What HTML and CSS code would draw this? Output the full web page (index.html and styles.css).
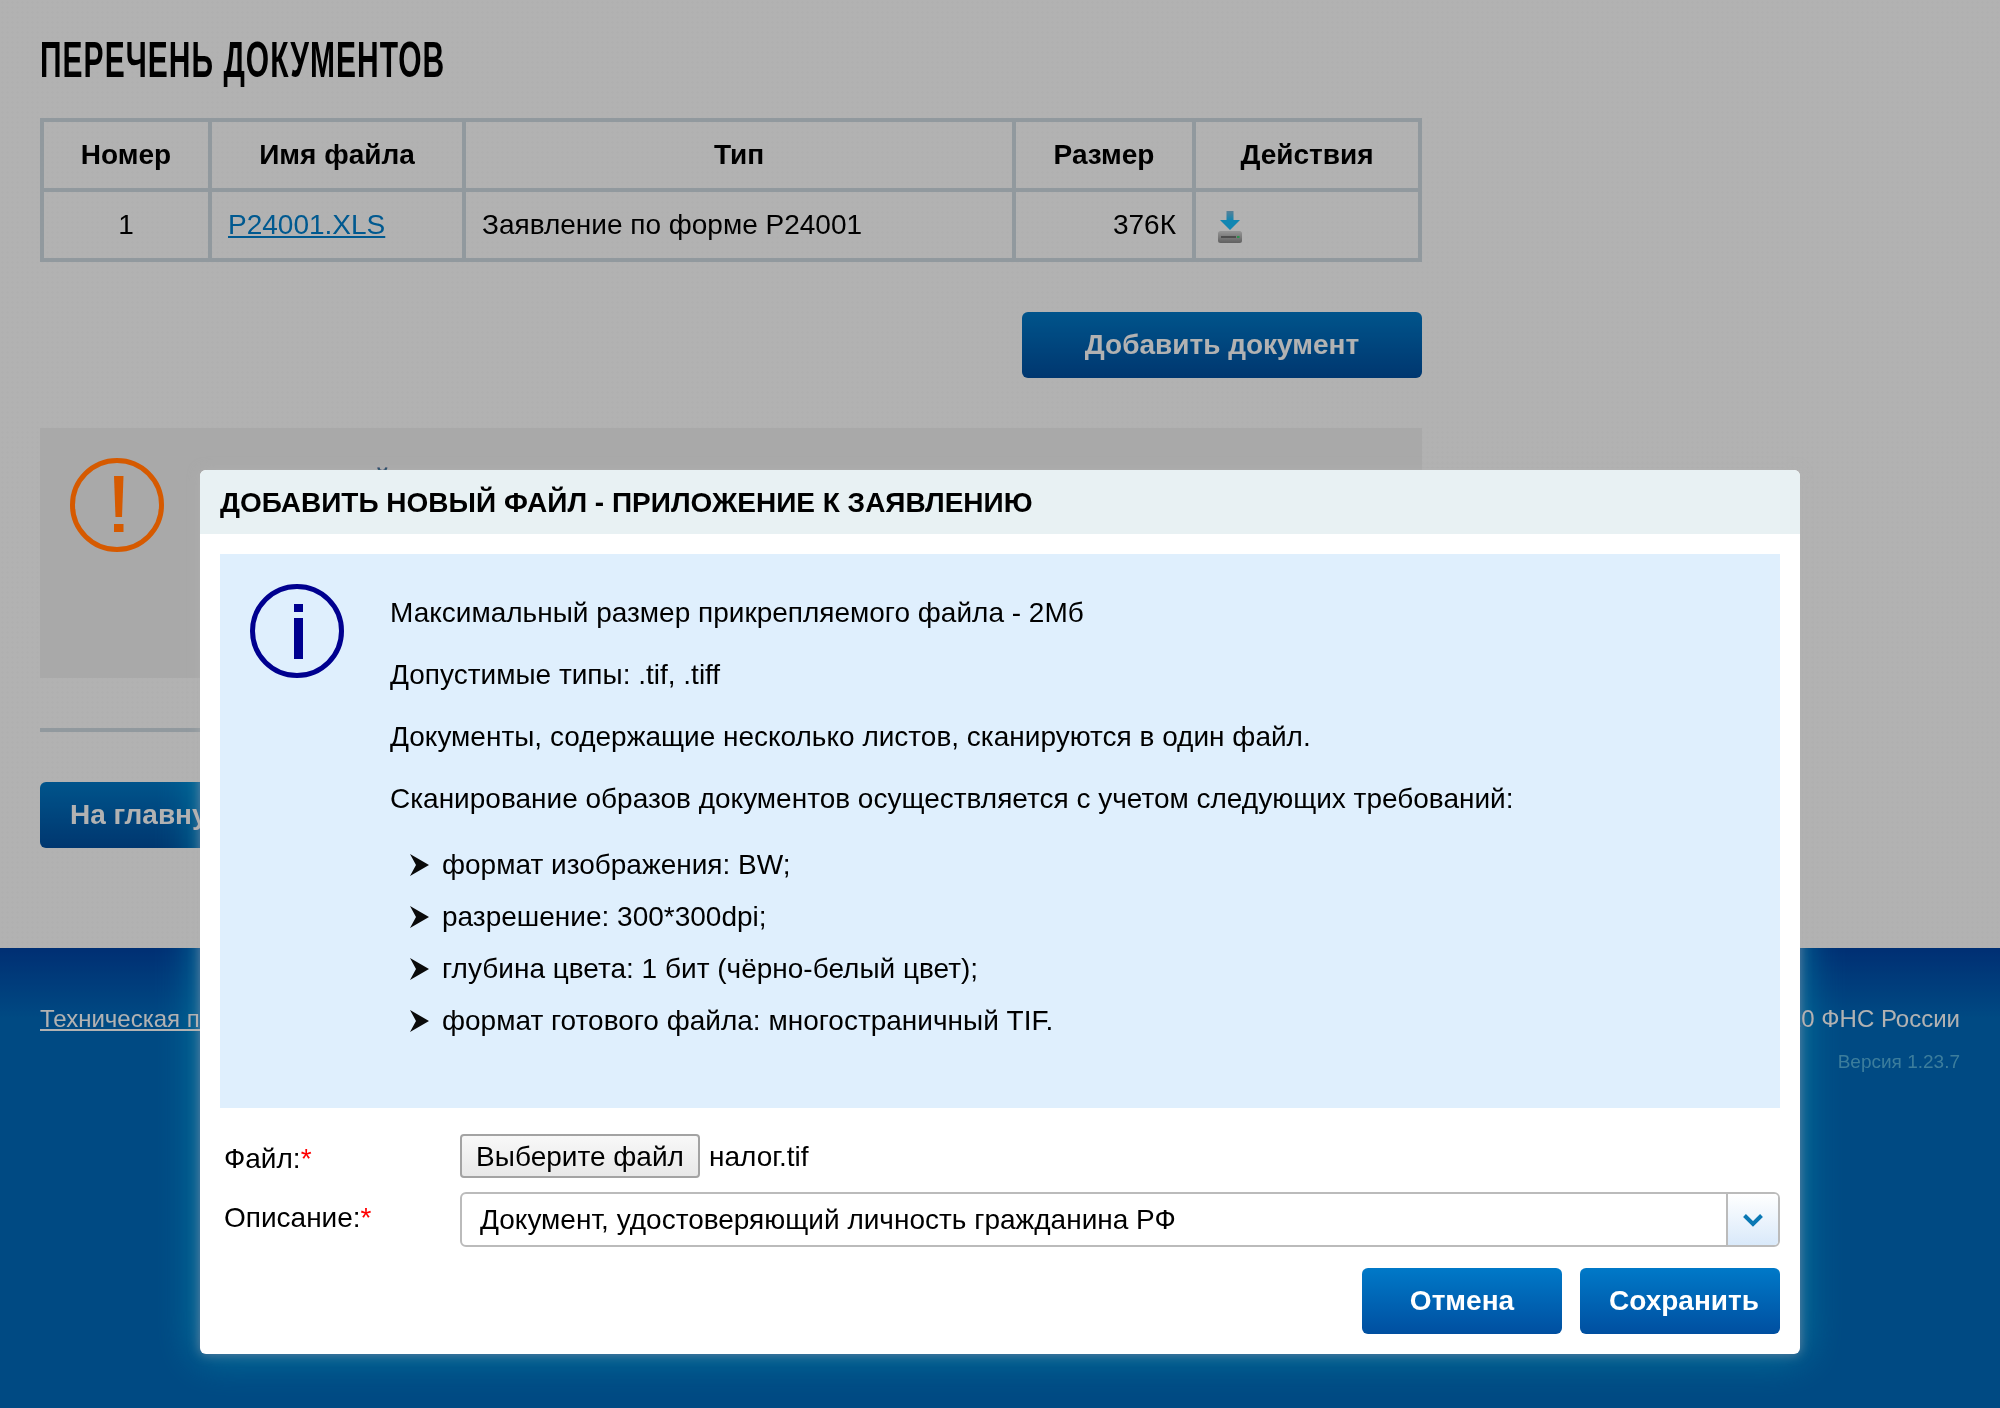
FILE: index.html
```html
<!DOCTYPE html>
<html lang="ru">
<head>
<meta charset="utf-8">
<title>Перечень документов</title>
<link rel="stylesheet" href="styles.css">
</head>
<body>
<div class="page">
  <main class="main">
    <h1 class="title"><span class="title-text">Перечень документов</span></h1>
    <table class="docs">
      <colgroup><col class="c1"><col class="c2"><col class="c3"><col class="c4"><col class="c5"></colgroup>
      <thead>
        <tr><th>Номер</th><th>Имя файла</th><th>Тип</th><th>Размер</th><th>Действия</th></tr>
      </thead>
      <tbody>
        <tr>
          <td class="center">1</td>
          <td><a class="file-link" href="#">P24001.XLS</a></td>
          <td>Заявление по форме Р24001</td>
          <td class="right">376К</td>
          <td>
            <svg class="dl-icon" viewBox="0 0 24 32" width="24" height="32">
              <defs>
                <linearGradient id="drive" x1="0" y1="0" x2="0" y2="1"><stop offset="0" stop-color="#d8d8d8"/><stop offset="1" stop-color="#8a8a8a"/></linearGradient>
                <linearGradient id="shaft" x1="0" y1="0" x2="0" y2="1"><stop offset="0" stop-color="#7fb8d8"/><stop offset=".5" stop-color="#18c0ff"/></linearGradient>
              </defs>
              <path d="M8.500 0h7v9h6.500l-10 10-10-10h6.500z" fill="url(#shaft)"/>
              <rect x="0" y="20" width="24" height="12" rx="2.500" fill="url(#drive)"/>
              <rect x="3" y="25" width="15" height="2" fill="#707070"/>
              <rect x="19" y="25" width="2.500" height="2" fill="#3fd070"/>
            </svg>
          </td>
        </tr>
      </tbody>
    </table>
    <div class="add-row"><a class="btn btn-wide" href="#">Добавить документ</a></div>
    <section class="notice">
      <svg class="warn-icon" viewBox="0 0 94 94" width="94" height="94">
        <circle cx="47" cy="47" r="44.500" fill="none" stroke="#d65a00" stroke-width="5"/>
        <path d="M44 18h9.500l-1.500 41h-6.500z" fill="#d65a00"/>
        <rect x="44" y="66" width="9.500" height="8" fill="#d65a00"/>
      </svg>
      <p class="notice-text">уважаемый</p>
    </section>
    <hr class="rule">
    <div class="home-row"><a class="btn btn-home" href="#">На главную</a></div>
  </main>
  <footer class="footer">
    <a class="footer-link" href="#">Техническая поддержка</a>
    <div class="footer-right">
      <div class="copy">© 2010 ФНС России</div>
      <div class="version">Версия 1.23.7</div>
    </div>
  </footer>
</div>

<div class="overlay"></div>

<div class="modal" role="dialog">
  <h2 class="modal-title">Добавить новый файл - приложение к заявлению</h2>
  <div class="modal-body">
    <div class="info">
      <svg class="info-icon" viewBox="0 0 94 94" width="94" height="94">
        <circle cx="47" cy="47" r="44.500" fill="none" stroke="#00008f" stroke-width="5"/>
        <rect x="44" y="20" width="9" height="8" fill="#00008f"/>
        <rect x="44" y="34" width="9" height="41" fill="#00008f"/>
      </svg>
      <div class="info-text">
        <p>Максимальный размер прикрепляемого файла - 2Мб</p>
        <p>Допустимые типы: .tif, .tiff</p>
        <p>Документы, содержащие несколько листов, сканируются в один файл.</p>
        <p>Сканирование образов документов осуществляется с учетом следующих требований:</p>
        <ul class="req">
          <li><svg class="chev" viewBox="0 0 19 22" width="19" height="22"><path d="M0 0 19 11 0 22 6 11z" fill="#0a0a0a"/></svg>формат изображения: BW;</li>
          <li><svg class="chev" viewBox="0 0 19 22" width="19" height="22"><path d="M0 0 19 11 0 22 6 11z" fill="#0a0a0a"/></svg>разрешение: 300*300dpi;</li>
          <li><svg class="chev" viewBox="0 0 19 22" width="19" height="22"><path d="M0 0 19 11 0 22 6 11z" fill="#0a0a0a"/></svg>глубина цвета: 1 бит (чёрно-белый цвет);</li>
          <li><svg class="chev" viewBox="0 0 19 22" width="19" height="22"><path d="M0 0 19 11 0 22 6 11z" fill="#0a0a0a"/></svg>формат готового файла: многостраничный TIF.</li>
        </ul>
      </div>
    </div>
    <form class="form">
      <div class="row row-file">
        <span class="label">Файл:<span class="req-star">*</span></span>
        <div class="file-field">
          <button type="button" class="file-btn">Выберите файл</button>
          <span class="file-name">налог.tif</span>
        </div>
      </div>
      <div class="row row-desc">
        <span class="label label-desc">Описание:<span class="req-star">*</span></span>
        <div class="select">
          <span class="select-value">Документ, удостоверяющий личность гражданина РФ</span>
          <span class="select-arrow">
            <svg viewBox="0 0 22 14" width="22" height="14"><path d="M2.500 2.500 11 11 19.500 2.500" fill="none" stroke="#0a78b4" stroke-width="4"/></svg>
          </span>
        </div>
      </div>
      <div class="actions">
        <button type="button" class="btn btn-modal">Отмена</button>
        <button type="button" class="btn btn-modal btn-save">Сохранить</button>
      </div>
    </form>
  </div>
</div>
</body>
</html>
```
FILE: styles.css
```css
* { box-sizing: border-box; }
html, body { margin: 0; padding: 0; }
body {
  width: 2000px;
  height: 1408px;
  overflow: hidden;
  background: #fff;
  color: #000;
  font-family: "Liberation Sans", Arial, sans-serif;
  font-size: 28px;
  position: relative;
}
.page { display: flex; flex-direction: column; height: 1408px; }
.main {
  height: 948px;
  padding: 0 578px 0 40px;
  flex: none;
  background-image: radial-gradient(circle, rgba(0, 0, 0, .012) 1px, transparent 1.2px);
  background-size: 5px 5px;
}
.title {
  margin: 0;
  height: 118px;
  padding-top: 30px;
  font-size: 50px;
  line-height: 60px;
  font-weight: 700;
  text-transform: uppercase;
}
.title-text { display: inline-block; transform: scaleX(.6); transform-origin: left center; white-space: nowrap; letter-spacing: 1.7px; }

.docs { width: 1378px; border-collapse: collapse; table-layout: fixed; }
.c1 { width: 168px; } .c2 { width: 254px; } .c3 { width: 550px; } .c4 { width: 180px; } .c5 { width: 226px; }
.docs th, .docs td { border: 4px solid #d0dbe3; height: 70px; padding: 0 16px; font-size: 28px; text-align: left; }
.docs th { text-align: center; font-weight: 700; }
.docs .center { text-align: center; }
.docs .right { text-align: right; }
.file-link { color: #0080ce; }
.dl-icon { display: block; margin: 4px 0 0 6px; filter: blur(.5px); }

.btn {
  display: flex;
  align-items: center;
  justify-content: center;
  height: 66px;
  border: 0;
  border-radius: 6px;
  background: linear-gradient(#0079c8, #004fa0);
  color: #fff;
  font: 700 28px "Liberation Sans", Arial, sans-serif;
  text-decoration: none;
}
.add-row { display: flex; justify-content: flex-end; margin-top: 50px; }
.btn-wide { width: 400px; }
.notice {
  display: flex;
  gap: 77px;
  height: 250px;
  margin-top: 50px;
  padding: 30px;
  background: #f3f3f3;
}
.warn-icon { position: relative; z-index: 1; flex: none; filter: blur(.4px); }
.notice-text { margin: 3px 0 0; line-height: 36px; }
.rule { height: 4px; margin: 50px 0 0; border: 0; background: #d0dbe3; }
.home-row { display: flex; margin-top: 50px; }
.btn-home { width: 300px; justify-content: flex-start; padding-left: 30px; }

.footer {
  flex: 1;
  display: flex;
  justify-content: space-between;
  padding: 56px 40px 0;
  background: linear-gradient(#0044a6 0, #006abc 70px, #006abc 100%);
  color: #fff;
}
.footer-link { color: #fff; font-size: 24px; line-height: 30px; }
.footer-right { text-align: right; }
.copy { font-size: 24px; line-height: 30px; }
.version { margin-top: 16px; font-size: 19px; line-height: 24px; color: #56b4e0; }

.overlay {
  position: absolute;
  inset: 0;
  background-color: rgba(0, 0, 0, .3);
}

.modal {
  position: absolute;
  left: 200px;
  top: 470px;
  width: 1600px;
  height: 884px;
  background: #fff;
  border-radius: 6px;
  box-shadow: 0 0 12px rgba(178, 178, 178, .6);
}
.modal::before {
  content: "";
  position: absolute;
  inset: 0;
  border-radius: 6px;
  box-shadow: 0 0 40px 4px rgb(0, 120, 160);
  mix-blend-mode: lighten;
  pointer-events: none;
}
.modal-title {
  margin: 0;
  height: 64px;
  padding: 1px 20px 0;
  background: #e8f1f3;
  border-radius: 6px 6px 0 0;
  font-size: 28px;
  line-height: 64px;
  font-weight: 700;
  text-transform: uppercase;
}
.modal-body { padding: 20px; }
.info {
  display: flex;
  height: 554px;
  padding: 30px 30px 0;
  gap: 46px;
  background: #dfeffd;
}
.info-icon { flex: none; filter: blur(.4px); }
.info-text { padding-top: 11px; line-height: 36px; }
.info-text p { margin: 0 0 26px; }
.req { list-style: none; margin: 30px 0 0; padding: 0 0 0 20px; }
.req li { display: flex; align-items: center; height: 36px; margin-bottom: 16px; }
.chev { flex: none; margin-right: 13px; filter: blur(.5px); }

.form { display: flex; flex-direction: column; margin-top: 26px; }
.row { display: flex; }
.row-file { height: 44px; }
.row-desc { margin-top: 14px; height: 55px; }
.label { width: 240px; padding: 1px 0 0 4px; line-height: 48px; flex: none; }
.label-desc { line-height: 36px; padding-top: 8px; }
.req-star { color: #f00; }
.file-field { display: flex; align-items: center; gap: 9px; height: 44px; }
.file-name { padding-top: 2px; }
.file-btn {
  width: 240px;
  height: 44px;
  padding: 2px 0 0;
  border: 2px solid #a3a3a3;
  border-radius: 4px;
  background: linear-gradient(#f8f8f8, #e8e8e8);
  color: #000;
  font: 28px "Liberation Sans", Arial, sans-serif;
}
.select {
  flex: 1;
  display: flex;
  height: 55px;
  border: 2px solid #bbb;
  border-radius: 6px;
  overflow: hidden;
}
.select-value { flex: 1; padding-left: 18px; line-height: 51px; }
.select-arrow {
  display: flex;
  align-items: center;
  justify-content: center;
  width: 52px;
  border-left: 2px solid #bbb;
  background: linear-gradient(#fff, #d9e9fa);
}
.actions { display: flex; justify-content: flex-end; gap: 18px; margin-top: 21px; }
.btn-modal { width: 200px; }
.btn-save { padding-left: 14px; }
```
